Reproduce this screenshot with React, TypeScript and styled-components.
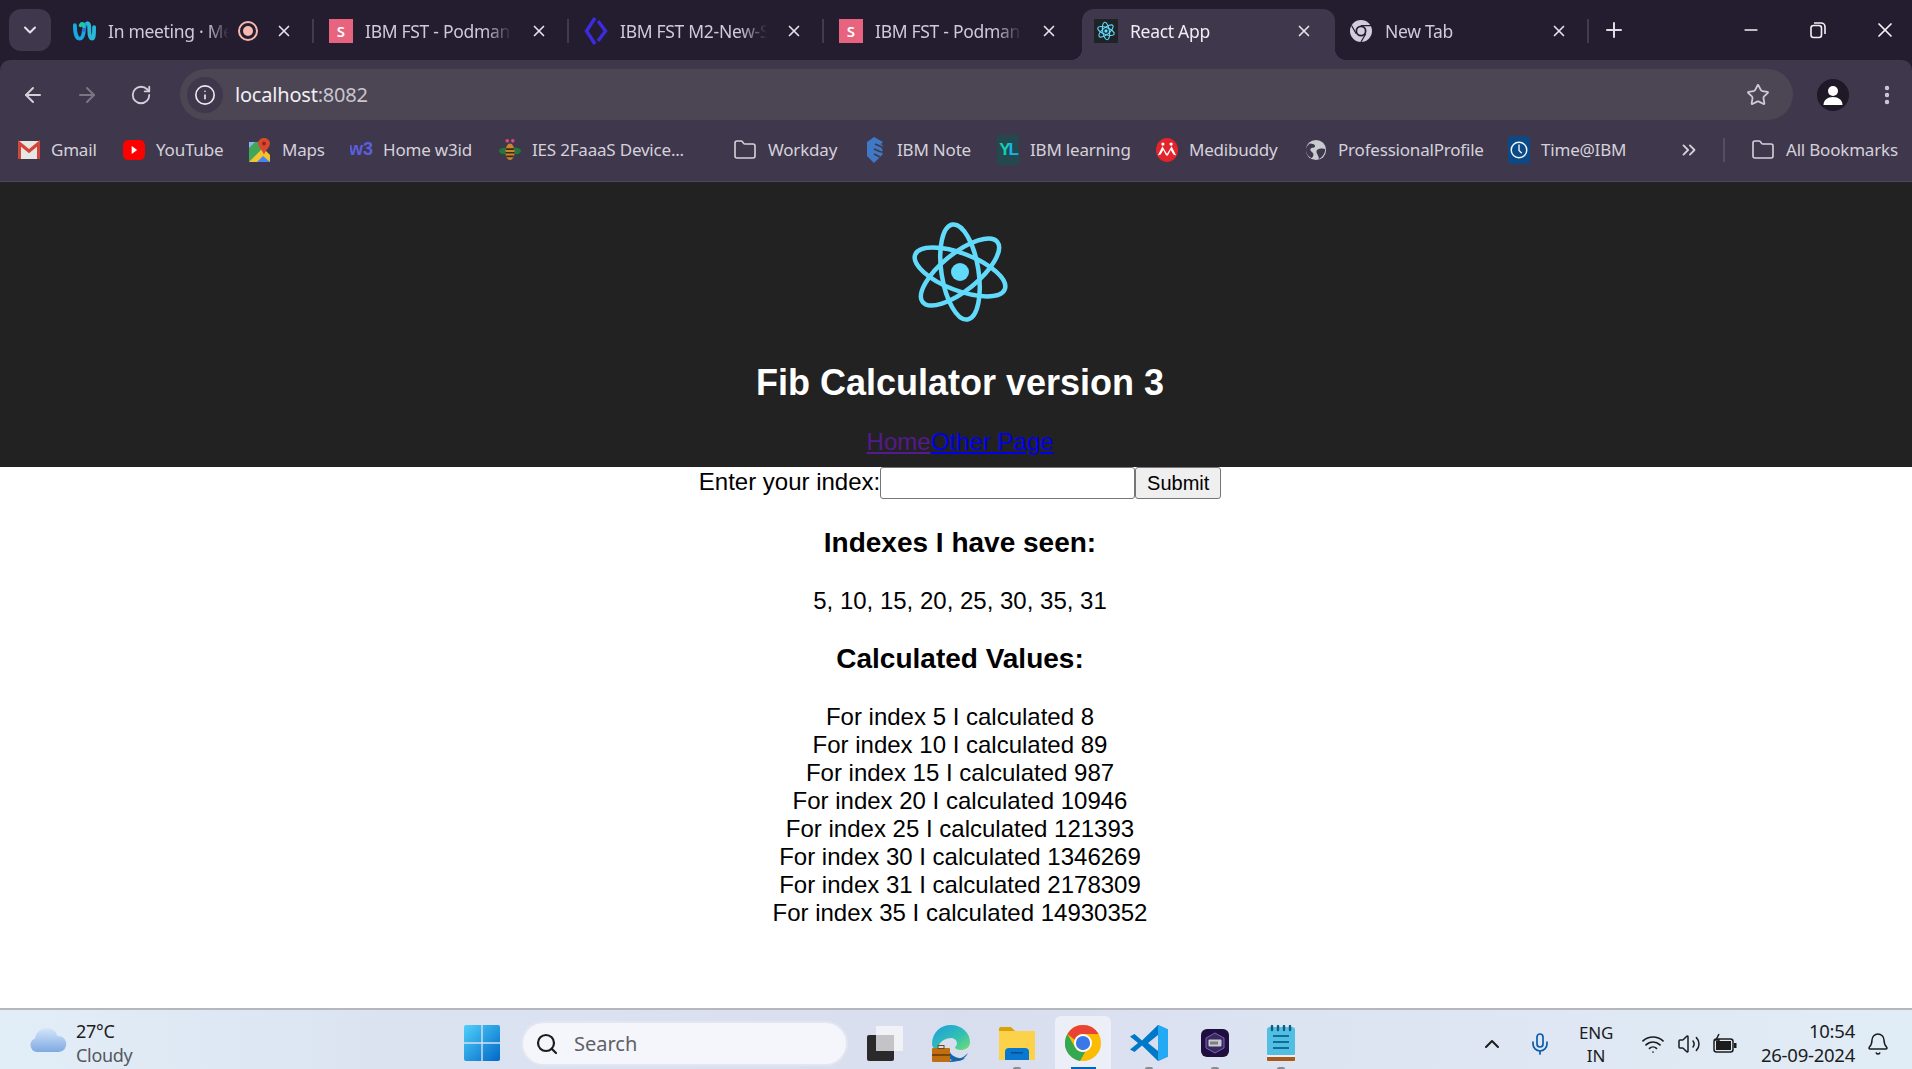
import React from "react";
import styled, { createGlobalStyle } from "styled-components";
import { ArrowLeft, ArrowRight, RotateCw, Info, Star, X, Plus, Minus, ChevronDown, ChevronUp, Folder, ChevronsRight, EllipsisVertical, Search, Mic, Wifi, Volume2, Bell } from "lucide-react";

const Global = createGlobalStyle`
  html, body { margin: 0; padding: 0; height: 100%; overflow: hidden; background: #fff; }
  #root { height: 100%; }
`;

const Shell = styled.div`
  width: 1912px; height: 1069px; display: flex; flex-direction: column; overflow: hidden; background: #241d30;
  font-family: "Liberation Sans", Arial, sans-serif;
`;

/* ---------- browser chrome ---------- */
const TabStrip = styled.div`
  height: 60px; flex: none; background: #241d30; display: flex; align-items: flex-end; padding-left: 9px;
  font-family: "Noto Sans", sans-serif; position: relative;
`;
const TabSearch = styled.div`
  width: 42px; height: 42px; margin: 0 8px 9px 0; border-radius: 12px; background: #3f384c; color: #e6e2ec;
  display: flex; align-items: center; justify-content: center;
`;
const Tab = styled.div<{ $active?: boolean; $sep?: boolean; $pad: number }>`
  width: 255px; height: 51px; flex: none; position: relative; display: flex; align-items: center;
  padding: 0 21px 8px ${p => p.$pad}px; box-sizing: border-box; color: ${p => (p.$active ? "#f0edf4" : "#cfcad8")};
  z-index: ${p => (p.$active ? 1 : 0)};
  ${p => p.$sep && `&::after { content: ""; position: absolute; right: 0; top: 10px; width: 2px; height: 24px; background: #423b4e; }`}
`;
const ActiveBg = styled.div`
  position: absolute; left: 3px; right: -1px; top: 0; bottom: 0; background: #3f384c; border-radius: 12px 12px 0 0; z-index: -1;
  &::before, &::after { content: ""; position: absolute; bottom: 0; width: 12px; height: 12px; }
  &::before { left: -12px; background: radial-gradient(circle at 0 0, transparent 12px, #3f384c 12.5px); }
  &::after { right: -12px; background: radial-gradient(circle at 100% 0, transparent 12px, #3f384c 12.5px); }
`;
const TabIcon = styled.div`
  width: 24px; height: 24px; flex: none; display: flex; align-items: center; justify-content: center; margin-right: 12px;
`;
const TabTitle = styled.div<{ $w: number }>`
  width: ${p => p.$w}px; flex: none; overflow: hidden; white-space: nowrap; font-size: 17.5px; letter-spacing: -0.3px; line-height: 24px;
  -webkit-mask-image: linear-gradient(to right, #000 82%, transparent 100%);
  mask-image: linear-gradient(to right, #000 82%, transparent 100%);
`;
const TabClose = styled.div`
  margin-left: auto; display: flex; color: #e6e2ec;
`;
const RecordDot = styled.div`
  width: 20px; height: 20px; box-sizing: border-box; margin-left: 9px; border-radius: 50%; border: 2px solid #f6b8ae;
  display: flex; align-items: center; justify-content: center;
  &::after { content: ""; width: 10px; height: 10px; border-radius: 50%; background: #f6b8ae; }
`;
const SIcon = styled.div`
  width: 24px; height: 24px; background: #e7637e; color: #fff; font-size: 15px; font-weight: 600;
  display: flex; align-items: center; justify-content: center; font-family: "Noto Sans", sans-serif;
`;
const NewTab = styled.div`
  margin: 0 0 9px 4px; width: 42px; height: 42px; display: flex; align-items: center; justify-content: center; color: #e0dce6;
`;
const WindowControls = styled.div`
  margin: 0 -6px 0 auto; height: 60px; display: flex; align-items: center; color: #f2f0f5;
`;
const WinBtn = styled.div`
  width: 67px; height: 60px; display: flex; align-items: center; justify-content: center; padding-bottom: 1px; box-sizing: border-box;
`;

const Toolbar = styled.div`
  height: 60px; flex: none; background: #3f384c; border-radius: 10px 10px 0 0; display: flex; align-items: flex-end; position: relative; color: #cfcad8;
`;
const NavButtons = styled.div`
  width: 180px; height: 51px; flex: none; display: flex; align-items: center; padding-left: 6px; box-sizing: border-box;
`;
const NavBtn = styled.div<{ $dim?: boolean }>`
  width: 54px; display: flex; justify-content: center; color: ${p => (p.$dim ? "#7b7585" : "#d3cfd9")};
`;
const Omnibox = styled.div`
  width: 1613px; height: 51px; flex: none; background: #4b4554; border-radius: 26px; display: flex; align-items: center; padding: 0 23px 0 7px; box-sizing: border-box;
`;
const InfoChip = styled.div`
  width: 36px; height: 36px; border-radius: 50%; background: #3f384c; display: flex; align-items: center; justify-content: center; color: #ece9f0; margin-right: 12px; flex: none;
`;
const Url = styled.div`
  font-family: "Noto Sans", sans-serif; font-size: 20px; letter-spacing: -0.2px; color: #f1eff3; flex: 1;
  span { color: #c9c5cf; }
`;
const ProfileWrap = styled.div`
  height: 51px; margin-left: 24px; display: flex; align-items: center; gap: 26px;
`;
const Avatar = styled.div`
  width: 32px; height: 32px; border-radius: 50%; background: #1e1827; display: flex; align-items: center; justify-content: center;
`;

const BookmarkBar = styled.div`
  height: 62px; flex: none; box-sizing: border-box; background: #3f384c; border-bottom: 1px solid #4f4a5a; display: flex; align-items: center; padding: 0 0 2px 18px;
  font-family: "Noto Sans", sans-serif; font-size: 17px; letter-spacing: -0.2px; color: #d5d1db;
`;
const Bookmark = styled.div<{ $w: number }>`
  flex: 0 0 ${p => p.$w}px; display: flex; align-items: center; white-space: nowrap; overflow: hidden; height: 30px;
`;
const BmIcon = styled.div<{ $wide?: boolean }>`
  width: ${p => (p.$wide ? 24 : 22)}px; height: 24px; flex: none; margin-right: 11px; display: flex; align-items: center; justify-content: center;
`;
const W3 = styled.span`
  font: bold 18px "Liberation Sans", sans-serif; color: #5b5fe0; letter-spacing: 0;
`;
const BarSep = styled.div`
  width: 2px; height: 24px; background: #555060; margin: 0 26px 0 0; flex: none;
`;
const MoreBtn = styled.div`
  width: 45px; display: flex; color: #d5d1db; flex: none; padding-left: 2px;
`;

/* ---------- page ---------- */
const Main = styled.main`
  flex: 1; min-height: 0; background: #fff; padding-left: 8px; text-align: center; font-size: 24px; color: #000; overflow: hidden;
`;
const Header = styled.header`
  background: #222; height: 285px; box-sizing: border-box; padding-top: 30px; margin-left: -8px; padding-left: 8px; color: #fff;
`;
const LogoBox = styled.div`
  height: 127px;
`;
const Title = styled.h1`
  font-size: 36px; line-height: 41px; margin: 23px 0 25px; font-weight: bold;
`;
const NavLine = styled.div`
  line-height: 28px;
`;
const PageLink = styled.a<{ $visited?: boolean }>`
  color: ${p => (p.$visited ? "#551a8b" : "#0000ee")}; text-decoration: underline; cursor: pointer;
`;
const Form = styled.form`
  display: flex; justify-content: center; align-items: flex-start; height: 32px;
`;
const Label = styled.label`
  line-height: 30px;
`;
const Input = styled.input`
  width: 255px; height: 32px; box-sizing: border-box; border: 1.5px solid #767676; border-radius: 3px; background: #fff; padding: 0; margin: 0;
`;
const Submit = styled.button`
  width: 86px; height: 32px; box-sizing: border-box; border: 1.5px solid #767676; border-radius: 3px; background: #efefef; font: 20px "Liberation Sans", Arial, sans-serif; color: #000; padding: 0; margin: 0;
`;
const Heading = styled.h3`
  font-size: 28px; line-height: 32px; margin: 28px 0; font-weight: bold;
`;
const Line = styled.div`
  line-height: 28px;
`;

/* ---------- taskbar ---------- */
const Taskbar = styled.div`
  height: 61px; flex: none; box-sizing: border-box; border-top: 2px solid #b6b7bd; display: flex; align-items: stretch; overflow: hidden;
  background: linear-gradient(90deg, #e2eef7 0%, #dbe3f1 20%, #d9deef 50%, #dde5f2 75%, #e1edf6 100%);
  font-family: "Noto Sans", sans-serif; color: #1c1c1c;
`;
const Weather = styled.div`
  width: 464px; flex: none; box-sizing: border-box; padding-left: 29px; display: flex; align-items: center;
`;
const WeatherText = styled.div`
  margin-left: 9px; font-size: 18px; line-height: 24px; letter-spacing: -0.3px; padding-top: 6px;
  small { display: block; font-size: 18px; color: #55585f; }
`;
const StartBtn = styled.div`
  width: 36px; flex: none; margin-right: 21px; padding-top: 7px; display: flex; align-items: center;
`;
const SearchBox = styled.div`
  width: 327px; height: 45px; margin: 11px 4px 0 0; flex: none; box-sizing: border-box; border-radius: 23px; background: #f5f6fb; border: 2px solid #e3e6f1; display: flex; align-items: center; padding-left: 12px; font-size: 20px; color: #5f6066; gap: 15px;
`;
const AppCell = styled.div<{ $active?: boolean }>`
  width: 66px; flex: none; display: flex; align-items: center; justify-content: center; position: relative; padding-top: 7px; box-sizing: border-box;
  ${p => p.$active && `
    &::before { content: ""; position: absolute; left: 5px; right: 5px; top: 6px; bottom: -6px; background: #eceff8; border-radius: 6px; }
    &::after { content: ""; position: absolute; left: 21px; right: 20px; bottom: 0; height: 2px; background: #0067c0; }
  `}
  svg { position: relative; }
`;
const Indicator = styled.span`
  position: absolute; bottom: -1px; left: 50%; margin-left: -4px; width: 8px; height: 3px; border-radius: 2px 2px 0 0; background: #8c8d94;
`;
const Tray = styled.div`
  margin-left: auto; display: flex; align-items: stretch; padding-right: 16px;
`;
const TrayCell = styled.div<{ $w: number }>`
  width: ${p => p.$w}px; display: flex; align-items: center; justify-content: center; color: #1c1c1c; padding-top: 8px; box-sizing: border-box;
`;
const Lang = styled.div`
  font-size: 17px; line-height: 23px; text-align: center; letter-spacing: -0.2px;
`;
const Clock = styled.div`
  width: 117px; box-sizing: border-box; padding: 6px 5px 0 0; text-align: right; font-size: 18.5px; line-height: 24px; white-space: nowrap; letter-spacing: -0.25px; align-self: center;
`;

/* ---------- drawings ---------- */
const ReactLogo = ({ size, stroke }: { size: number; stroke: number }) => (
  <svg width={size} height={size} viewBox="0 0 120 120" fill="none" stroke="#61dafb" strokeWidth={stroke}>
    <ellipse cx="60" cy="60" rx="48" ry="18.5" transform="rotate(81 60 60)" />
    <ellipse cx="60" cy="60" rx="48" ry="18.5" transform="rotate(21 60 60)" />
    <ellipse cx="60" cy="60" rx="48" ry="18.5" transform="rotate(141 60 60)" />
    <circle cx="60" cy="60" r="9" fill="#61dafb" stroke="none" />
  </svg>
);
const FaviconFrame = styled.div`
  width: 24px; height: 24px; background: #1f2226; display: flex; align-items: center; justify-content: center;
`;
const Webex = () => (
  <svg width="25" height="24" viewBox="0 0 25 24" fill="none" strokeWidth="4" strokeLinecap="round">
    <path d="M3 6c0 9 2 14 5 14s4-4 4.500-9" stroke="#19a7e0" />
    <path d="M12.500 11C13 6 14 4 16 4" stroke="#2f6bd8" />
    <path d="M9 6c1-2 3-2 3.500 1" stroke="#1cc8a8" />
    <path d="M16 4c2 0 2 3 2 7s1 9 3 9 2-6 2-12" stroke="#28b8d8" />
  </svg>
);
const Diamond = () => (
  <svg width="24" height="30" viewBox="0 0 24 30" fill="none" stroke="#3d2be0" strokeWidth="3.4">
    <path d="M11 2 2.500 15 11 28" /><path d="M14 5 21.500 15 14 25" />
  </svg>
);
const ChromeGrey = () => (
  <svg width="24" height="24" viewBox="0 0 48 48">
    <circle cx="24" cy="24" r="22" fill="#d3cbdf" />
    <circle cx="24" cy="24" r="11" fill="#241d30" />
    <circle cx="24" cy="24" r="7.500" fill="#d3cbdf" />
    <path d="M24 13h20M14.500 29.500 5 13M33.500 29.500 24 46" stroke="#241d30" strokeWidth="2.500" />
  </svg>
);
const Gmail = () => (
  <svg width="22" height="20" viewBox="0 0 22 18" preserveAspectRatio="none">
    <rect x="0" y="1" width="22" height="16" fill="#e8e6e4" rx="1" />
    <path d="M1.500 17V3l9.500 7 9.500-7v14" fill="none" stroke="#d2463a" strokeWidth="3" />
  </svg>
);
const YouTube = () => (
  <svg width="24" height="20" viewBox="0 0 24 18" preserveAspectRatio="none">
    <rect width="24" height="18" rx="5" fill="#f00" /><path d="M9.500 5.500v7l6-3.500z" fill="#fff" />
  </svg>
);
const Maps = () => (
  <svg width="22" height="26" viewBox="0 0 22 26">
    <path d="M0 5h14v20H0z" fill="#3fa757" /><path d="M0 25 14 11l7 7v7z" fill="#f4c430" /><path d="M8 25l6-6 7 6z" fill="#4285f4" />
    <path d="M0 5h6L0 11z" fill="#8ab4f8" />
    <path d="M15 1c3.500 0 6 2.500 6 5.500 0 3.500-4 6-6 11-2-5-6-7.500-6-11C9 3.500 11.500 1 15 1z" fill="#d9482f" /><circle cx="15" cy="6.500" r="2" fill="#8e2a18" />
  </svg>
);
const Bee = () => (
  <svg width="24" height="26" viewBox="0 0 24 26">
    <ellipse cx="5.500" cy="14" rx="5.500" ry="3.500" fill="#1f7a3a" /><ellipse cx="18.500" cy="14" rx="5.500" ry="3.500" fill="#1f7a3a" />
    <ellipse cx="12" cy="15" rx="5" ry="9" fill="#c9842e" />
    <path d="M7.500 12h9M7 16h10M8 20h8" stroke="#3a2a18" strokeWidth="1.800" />
    <circle cx="9" cy="3" r="2" fill="#e0457b" /><circle cx="15" cy="3" r="2" fill="#e0457b" />
  </svg>
);
const Shield = () => (
  <svg width="20" height="26" viewBox="0 0 20 26">
    <path d="M9 0 18 5l-2 2 2 2-2 2 2 2-2 2 2 2-3 3-6 6-7-7V5z" fill="#3f78c4" />
    <path d="M10 7l7 3M9 12l7 3M9 17l6 3" stroke="#3f384c" strokeWidth="1.500" />
  </svg>
);
const YLIcon = styled.div`
  width: 24px; height: 30px; background: #23484e; display: flex; align-items: center; justify-content: center; font: bold 17px "Liberation Sans", sans-serif; letter-spacing: -2px; color: #14d0b0;
  span { color: #18b4ee; }
`;
const Medi = () => (
  <svg width="24" height="26" viewBox="0 0 24 26">
    <ellipse cx="12" cy="13" rx="12" ry="13" fill="#e3242b" />
    <path d="M2 19l5-10 3 5 2 3 2-3 3-5 5 10-3-1-3-5-3 6h-2l-3-6-3 5z" fill="#fff" />
    <circle cx="7.500" cy="6.500" r="1.800" fill="#fff" /><circle cx="16.500" cy="6.500" r="1.800" fill="#fff" />
  </svg>
);
const Globe = () => (
  <svg width="24" height="24" viewBox="0 0 24 24">
    <circle cx="12" cy="12" r="11" fill="#c8ccd0" />
    <path d="M5 5c4 0 6 1 6 3s-4 1-5 3 2 3 3 5-1 4-2 5C3 19 1 15 1 12s2-5 4-7zM13 12c3-2 7-2 9-1 0 5-3 9-7 11 1-3-4-7-2-10z" fill="#3f384c" />
  </svg>
);
const TimeIcon = () => (
  <svg width="24" height="30" viewBox="0 0 24 30">
    <rect width="24" height="30" rx="4" fill="#0b4a86" />
    <circle cx="12" cy="15" r="8.500" fill="none" stroke="#f0f4f8" strokeWidth="1.600" />
    <path d="M12 9v6.500l3 3" fill="none" stroke="#f0f4f8" strokeWidth="1.500" />
  </svg>
);
const Restore = () => (
  <svg width="16" height="18" viewBox="0 0 16 18" fill="none" stroke="#f2f0f5" strokeWidth="1.600">
    <rect x="1" y="4.500" width="10.500" height="12" rx="2.500" /><path d="M4 2h7a4 4 0 0 1 4 4v7" />
  </svg>
);
const PersonIcon = () => (
  <svg width="22" height="22" viewBox="0 0 22 22" fill="#fff">
    <circle cx="11" cy="7" r="5" /><path d="M1.500 21c0-5 4-8 9.500-8s9.500 3 9.500 8z" />
  </svg>
);
const Cloud = () => (
  <svg width="38" height="26" viewBox="0 0 38 26">
    <defs><linearGradient id="cl" x1="0" y1="0" x2="0" y2="1"><stop offset="0" stopColor="#d4e6f8" /><stop offset="1" stopColor="#7fa9e4" /></linearGradient></defs>
    <path d="M8 25a7 7 0 0 1-2-13.500C7 5 12 1 18 1c5 0 9 3 10.500 8A8 8 0 0 1 30 25z" fill="url(#cl)" />
  </svg>
);
const WinLogo = () => (
  <svg width="36" height="36" viewBox="0 0 36 36">
    <defs><linearGradient id="wl" x1="0" y1="0" x2="1" y2="1"><stop offset="0" stopColor="#50d0fa" /><stop offset="1" stopColor="#0068c8" /></linearGradient></defs>
    <rect width="36" height="36" rx="2" fill="url(#wl)" />
    <path d="M18 0v36M0 18h36" stroke="#d9deef" strokeWidth="1.400" />
  </svg>
);
const TaskView = () => (
  <svg width="36" height="36" viewBox="0 0 36 36">
    <rect x="0" y="10" width="27" height="26" rx="2" fill="#2a2a2a" />
    <rect x="9" y="1" width="27" height="25" rx="1" fill="#f3f3f6" opacity=".92" />
    <rect x="9" y="10" width="18" height="16" fill="#c4c4c8" />
  </svg>
);
const Edge = () => (
  <svg width="38" height="38" viewBox="0 0 38 38">
    <defs><linearGradient id="eg" x1="0" y1="0" x2="1" y2="1"><stop offset="0" stopColor="#1b9de2" /><stop offset=".6" stopColor="#35c1b0" /><stop offset="1" stopColor="#74e06c" /></linearGradient></defs>
    <path d="M0 20C0 8 9 1 19 1c11 0 19 8 19 17 0 6-5 8-9 8-3 0-6-1-6-3 3-1 3-8-3-9C12 14 7 18 5 26 2 25 0 23 0 20z" fill="url(#eg)" />
    <path d="M14 38c3-3 14 0 22-9-2 5-9 9-17 9z" fill="#1565a8" />
    <path d="M12 26c0 6 6 11 13 11 4 0 7-2 8-3-6 1-14-1-16-8z" fill="#1565a8" />
    <rect x="0" y="24" width="18" height="14" rx="1" fill="#c06f10" /><rect x="0" y="30" width="18" height="2" fill="#7a440a" /><rect x="6" y="21.500" width="6" height="3" fill="none" stroke="#7a440a" />
  </svg>
);
const Explorer = () => (
  <svg width="36" height="34" viewBox="0 0 36 34">
    <path d="M0 3a2 2 0 0 1 2-2h10l4 4h18v6H0z" fill="#dba100" />
    <rect x="0" y="5" width="36" height="29" fill="#fcd24a" />
    <path d="M6 34v-8a4 4 0 0 1 4-4h16a4 4 0 0 1 4 4v8z" fill="#0878d0" />
    <rect x="12" y="26" width="12" height="1.500" fill="#054d8c" />
  </svg>
);
const Chrome = () => (
  <svg width="36" height="36" viewBox="0 0 48 48">
    <circle cx="24" cy="24" r="24" fill="#fbbc04" />
    <path d="M24 0a24 24 0 0 1 20.800 12H24a12 12 0 0 0-11.200 7.700L3.200 12A24 24 0 0 1 24 0z" fill="#ea4335" />
    <path d="M3.200 12l10.400 18a12 12 0 0 0 13.400 5.600L20 48A24 24 0 0 1 3.200 12z" fill="#34a853" />
    <circle cx="24" cy="24" r="12" fill="#fff" /><circle cx="24" cy="24" r="9.500" fill="#3b78e7" />
  </svg>
);
const VSCode = () => (
  <svg width="38" height="36" viewBox="0 0 38 36">
    <path d="M28 0 38 4.500v27L28 36 12 20.500 4.500 27 0 24.500 8 18 0 11.500 4.500 9l7.500 6.500z" fill="#0078c8" />
    <path d="M28 0 38 4.500v27L28 36z" fill="#24a9f4" />
    <path d="M28 10v16l-10-8z" fill="#d9deef" />
  </svg>
);
const PodmanApp = () => (
  <svg width="28" height="28" viewBox="0 0 28 28">
    <rect width="28" height="28" rx="6" fill="#1e0f3c" />
    <path d="M14 4 23 9v10l-9 5-9-5V9z" fill="#3a2a5c" stroke="#7a5cd0" strokeWidth="1" />
    <rect x="7.500" y="10.500" width="13" height="7" rx="1" fill="#c8c8d2" />
    <path d="M10 12.500v3M12 12.500v3M14 12.500v3M16 12.500v3" stroke="#333" />
  </svg>
);
const Notepad = () => (
  <svg width="28" height="36" viewBox="0 0 28 36">
    <rect x="0" y="2" width="28" height="29" rx="3" fill="#52bfe2" /><rect x="0" y="31" width="28" height="5" rx="1" fill="#a8591c" /><rect x="0" y="30" width="28" height="2" fill="#eee" />
    <path d="M5 1v4M11 1v4M17 1v4M23 1v4" stroke="#0f5c80" strokeWidth="2.400" strokeLinecap="round" />
    <path d="M6 11h16M6 17h16M6 23h16" stroke="#0f6e96" strokeWidth="1.800" />
  </svg>
);
const Battery = () => (
  <svg width="24" height="22" viewBox="0 0 24 22" fill="none">
    <rect x="1" y="6" width="19" height="13" rx="2.500" stroke="#1c1c1c" strokeWidth="1.500" />
    <rect x="3" y="8" width="15" height="9" fill="#1c1c1c" /><rect x="21" y="10" width="2.500" height="5" fill="#1c1c1c" />
    <path d="M6 1 3 7h3l-1 5" stroke="#1c1c1c" strokeWidth="1.500" />
  </svg>
);

const tabs = [
  { id: 1, icon: <Webex />, title: "In meeting · Meet", w: 121, record: true, sep: true, pad: 13 },
  { id: 2, icon: <SIcon>S</SIcon>, title: "IBM FST - Podman", w: 147, sep: true, pad: 15 },
  { id: 3, icon: <Diamond />, title: "IBM FST M2-New-Site", w: 147, sep: true, pad: 15 },
  { id: 4, icon: <SIcon>S</SIcon>, title: "IBM FST - Podman", w: 147, pad: 15 },
  { id: 5, icon: <FaviconFrame><ReactLogo size={22} stroke={6} /></FaviconFrame>, title: "React App", w: 147, active: true, pad: 15 },
  { id: 6, icon: <ChromeGrey />, title: "New Tab", w: 147, sep: true, pad: 15 },
];

const bookmarks = [
  { label: "Gmail", w: 105, icon: <Gmail /> },
  { label: "YouTube", w: 126, icon: <YouTube /> },
  { label: "Maps", w: 101, icon: <Maps /> },
  { label: "Home w3id", w: 149, icon: <W3>w3</W3> },
  { label: "IES 2FaaaS Device...", w: 234, icon: <Bee /> },
  { label: "Workday", w: 131, wide: true, icon: <Folder size={24} strokeWidth={1.6} /> },
  { label: "IBM Note", w: 133, icon: <Shield /> },
  { label: "IBM learning", w: 159, icon: <YLIcon>Y<span>L</span></YLIcon> },
  { label: "Medibuddy", w: 149, icon: <Medi /> },
  { label: "ProfessionalProfile", w: 203, icon: <Globe /> },
  { label: "Time@IBM", w: 168, icon: <TimeIcon /> },
];

const results = [
  [5, 8], [10, 89], [15, 987], [20, 10946], [25, 121393], [30, 1346269], [31, 2178309], [35, 14930352],
];

export default function App() {
  return (
    <Shell>
      <Global />
      <TabStrip>
        <TabSearch><ChevronDown size={20} strokeWidth={2.4} /></TabSearch>
        {tabs.map(t => (
          <Tab key={t.id} $active={t.active} $sep={t.sep} $pad={t.pad}>
            {t.active && <ActiveBg />}
            <TabIcon>{t.icon}</TabIcon>
            <TabTitle $w={t.w}>{t.title}</TabTitle>
            {t.record && <RecordDot />}
            <TabClose><X size={18} strokeWidth={2.2} /></TabClose>
          </Tab>
        ))}
        <NewTab><Plus size={24} strokeWidth={2} /></NewTab>
        <WindowControls>
          <WinBtn><Minus size={20} strokeWidth={2} /></WinBtn>
          <WinBtn><Restore /></WinBtn>
          <WinBtn><X size={24} strokeWidth={1.7} /></WinBtn>
        </WindowControls>
      </TabStrip>
      <Toolbar>
        <NavButtons>
          <NavBtn><ArrowLeft size={24} /></NavBtn>
          <NavBtn $dim><ArrowRight size={24} /></NavBtn>
          <NavBtn><RotateCw size={22} /></NavBtn>
        </NavButtons>
        <Omnibox>
          <InfoChip><Info size={22} strokeWidth={1.8} /></InfoChip>
          <Url>localhost<span>:8082</span></Url>
          <Star size={24} strokeWidth={1.8} />
        </Omnibox>
        <ProfileWrap>
          <Avatar><PersonIcon /></Avatar>
          <EllipsisVertical size={24} strokeWidth={2.4} />
        </ProfileWrap>
      </Toolbar>
      <BookmarkBar>
        {bookmarks.map(b => (
          <Bookmark key={b.label} $w={b.w}>
            <BmIcon $wide={b.wide}>{b.icon}</BmIcon>
            {b.label}
          </Bookmark>
        ))}
        <MoreBtn><ChevronsRight size={22} /></MoreBtn>
        <BarSep />
        <Bookmark $w={150}>
          <BmIcon $wide><Folder size={24} strokeWidth={1.6} /></BmIcon>
          All Bookmarks
        </Bookmark>
      </BookmarkBar>
      <Main>
        <Header>
          <LogoBox><ReactLogo size={120} stroke={4.5} /></LogoBox>
          <Title>Fib Calculator version 3</Title>
          <NavLine>
            <PageLink $visited>Home</PageLink>
            <PageLink>Other Page</PageLink>
          </NavLine>
        </Header>
        <Form>
          <Label>Enter your index:</Label>
          <Input />
          <Submit type="button">Submit</Submit>
        </Form>
        <Heading>Indexes I have seen:</Heading>
        <Line>5, 10, 15, 20, 25, 30, 35, 31</Line>
        <Heading>Calculated Values:</Heading>
        {results.map(([i, v]) => (
          <Line key={i}>For index {i} I calculated {v}</Line>
        ))}
      </Main>
      <Taskbar>
        <Weather>
          <Cloud />
          <WeatherText>27°C<small>Cloudy</small></WeatherText>
        </Weather>
        <StartBtn><WinLogo /></StartBtn>
        <SearchBox><Search size={24} strokeWidth={2.2} color="#1c1c1c" />Search</SearchBox>
        <AppCell><TaskView /></AppCell>
        <AppCell><Edge /></AppCell>
        <AppCell><Explorer /><Indicator /></AppCell>
        <AppCell $active><Chrome /></AppCell>
        <AppCell><VSCode /><Indicator /></AppCell>
        <AppCell><PodmanApp /><Indicator /></AppCell>
        <AppCell><Notepad /><Indicator /></AppCell>
        <Tray>
          <TrayCell $w={44}><ChevronUp size={24} strokeWidth={2} /></TrayCell>
          <TrayCell $w={52}><Mic size={24} strokeWidth={1.7} color="#0b5cad" /></TrayCell>
          <TrayCell $w={60}><Lang>ENG<br />IN</Lang></TrayCell>
          <TrayCell $w={9} />
          <TrayCell $w={36}><Wifi size={24} strokeWidth={1.7} /></TrayCell>
          <TrayCell $w={36}><Volume2 size={24} strokeWidth={1.5} /></TrayCell>
          <TrayCell $w={36}><Battery /></TrayCell>
          <Clock>10:54<br />26-09-2024</Clock>
          <TrayCell $w={36}><Bell size={24} strokeWidth={1.5} /></TrayCell>
        </Tray>
      </Taskbar>
    </Shell>
  );
}
